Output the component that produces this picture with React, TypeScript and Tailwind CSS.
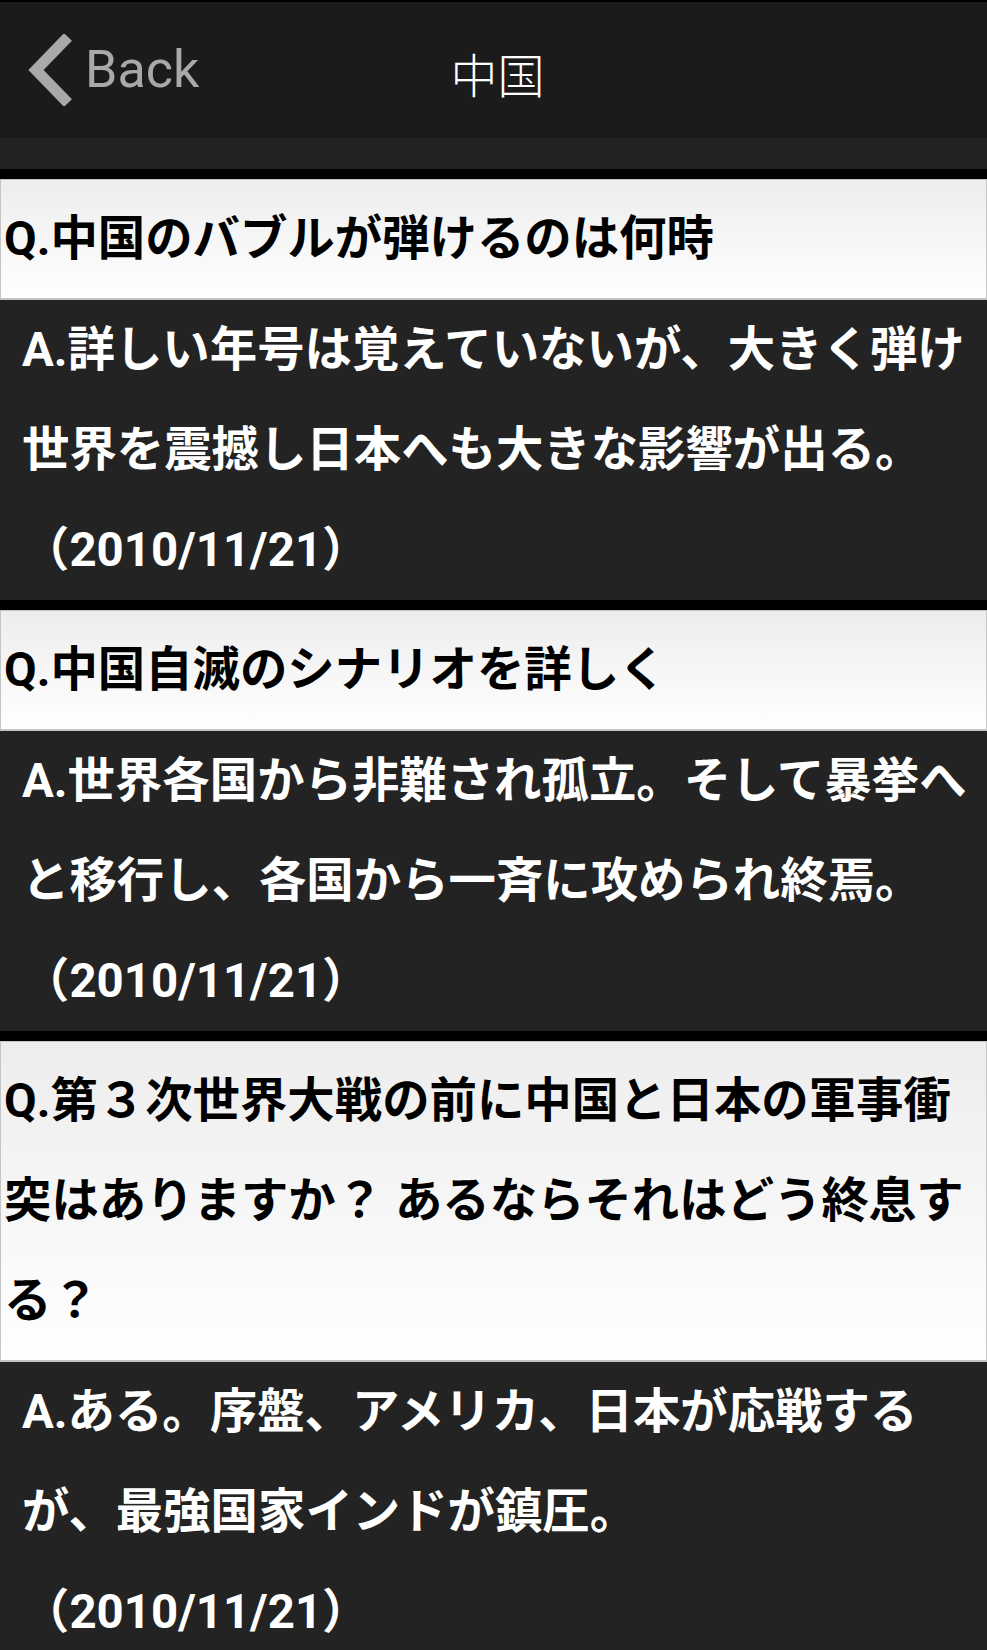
import React from 'react';

interface QaItem {
  q: string;
  a: string;
  date: string;
}

// Items in the list as seen on screen
const items: QaItem[] = [
  {
    q: 'Q.中国のバブルが弾けるのは何時',
    a: 'A.詳しい年号は覚えていないが、大きく弾け世界を震撼し日本へも大きな影響が出る。',
    date: '（2010/11/21）',
  },
  {
    q: 'Q.中国自滅のシナリオを詳しく',
    a: 'A.世界各国から非難され孤立。そして暴挙へと移行し、各国から一斉に攻められ終焉。',
    date: '（2010/11/21）',
  },
  {
    q: 'Q.第３次世界大戦の前に中国と日本の軍事衝突はありますか？ あるならそれはどう終息する？',
    a: 'A.ある。序盤、アメリカ、日本が応戦するが、最強国家インドが鎮圧。',
    date: '（2010/11/21）',
  },
];

const body = { fontFamily: 'Roboto, "Noto Sans CJK JP", sans-serif' };

function Header() {
  return (
    <header className="h-[138px] border-t-2 border-black bg-[#1b1b1b] grid grid-cols-[1fr_auto_1fr] items-center">
      <div className="flex items-center pl-[28px]">
        <svg width="46" height="72" viewBox="0 0 46 72" className="shrink-0">
          <path d="M40 3 L8 36 L40 69" fill="none" stroke="#a9a9a9" strokeWidth="11" strokeLinejoin="miter" />
        </svg>
        <span
          className="ml-[11px] text-[52px] leading-none text-[#a9a9a9]"
          style={{ fontFamily: 'Roboto, "Liberation Sans", sans-serif' }}
        >
          Back
        </span>
      </div>
      <h1
        className="text-[47px] leading-none text-white font-light pl-[8px] pt-[4px]"
        style={{ fontFamily: '"Noto Sans CJK SC", "Noto Sans CJK JP", sans-serif' }}
      >
        中国
      </h1>
      <div />
    </header>
  );
}

function Answer({ text, date }: { text: string; date?: string }) {
  return (
    <div className="bg-[#232323] pl-[22px] pr-[6px] text-white font-bold text-[47.4px] leading-[100px]">
      {text}
      {text && <br />}
      {date}
    </div>
  );
}

export default function App() {
  return (
    <div className="w-[987px] h-[1650px] overflow-hidden bg-black" style={body}>
      <Header />

      {/* tail of the previous answer, scrolled under the bar */}
      <div className="h-[31px] overflow-hidden bg-[#232323]">
        <div className="-mt-[72px]">
          <Answer text="" date="（2010/11/21）" />
        </div>
      </div>

      {items.map((item, i) => (
        <div key={i} className="mt-[10px]">
          <div className="border border-b-2 border-[#c4c4c4] bg-gradient-to-b from-[#ededed] to-white py-[9px] pl-[3px] pr-[4px] text-black font-bold text-[47.4px] leading-[100px]">
            {item.q}
          </div>
          <Answer text={item.a} date={item.date} />
        </div>
      ))}
    </div>
  );
}
